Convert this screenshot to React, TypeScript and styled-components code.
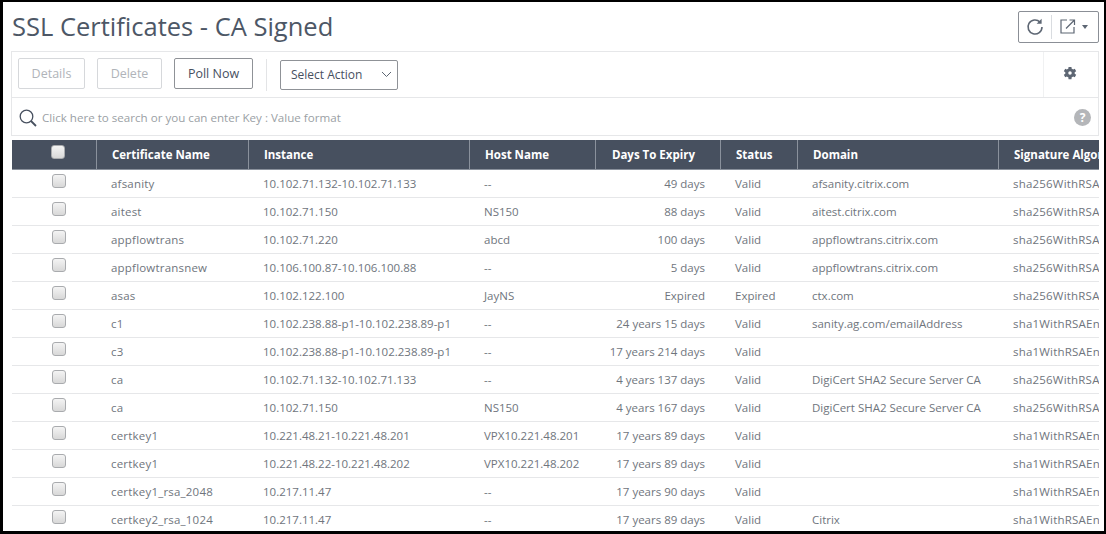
import React from "react";
import styled, { createGlobalStyle } from "styled-components";

const Global = createGlobalStyle`
  html, body { margin: 0; padding: 0; background: #fff; }
  body { font-family: "Open Sans", "Noto Sans", sans-serif; overflow: hidden; }
`;

const Frame = styled.div`
  box-sizing: border-box;
  width: 1106px;
  height: 534px;
  border-style: solid;
  border-color: #000;
  border-width: 2px 2px 3px 3px;
  padding: 0 5px 0 8px;
  background: #fff;
  overflow: hidden;
`;

const Header = styled.header`
  display: flex;
  align-items: center;
  justify-content: space-between;
  height: 49px;
  padding: 0 0 0 1px;
`;

const Title = styled.h1`
  margin: 0 0 1px;
  font-size: 25.5px;
  line-height: 32px;
  font-weight: 400;
  color: #4d5766;
`;

const HeaderActions = styled.div`
  display: flex;
  align-items: center;
  box-sizing: border-box;
  width: 81px;
  height: 32px;
  border: 1px solid #8b8f96;
  border-radius: 2px;
  color: #5d6673;
`;

const RefreshCell = styled.div`
  display: flex;
  align-items: center;
  justify-content: center;
  width: 32px;
  height: 24px;
  border-right: 1px solid #d9dce0;
`;

const ExportCell = styled.div`
  display: flex;
  align-items: center;
  flex: 1;
  gap: 6px;
  padding-left: 8px;
`;

const Caret = styled.span`
  width: 0;
  height: 0;
  border-left: 3.5px solid transparent;
  border-right: 3.5px solid transparent;
  border-top: 4px solid #5d6673;
`;

const Panel = styled.div`
  box-sizing: border-box;
  border: 1px solid #e6e7e9;
  width: 1088px;
`;

const Toolbar = styled.div`
  display: flex;
  align-items: center;
  height: 45px;
  padding-left: 6px;
  border-bottom: 1px solid #e6e7e9;
`;

const Button = styled.button<{ $off?: boolean; $w: number }>`
  box-sizing: border-box;
  width: ${(p) => p.$w}px;
  height: 31px;
  margin: 0 12px 2px 0;
  border: 1px solid ${(p) => (p.$off ? "#d6d8db" : "#8f9297")};
  border-radius: 2px;
  background: #fff;
  padding: 0;
  font: 400 12.5px "Open Sans", sans-serif;
  color: ${(p) => (p.$off ? "#b0b4b9" : "#47505f")};
`;

const Divider = styled.div`
  width: 1px;
  height: 32px;
  margin: 0 13px 0 1px;
  background: #e3e4e6;
`;

const Select = styled.div`
  box-sizing: border-box;
  display: flex;
  align-items: center;
  justify-content: space-between;
  width: 118px;
  height: 30px;
  padding: 0 5px 0 10px;
  border: 1px solid #8f9297;
  border-radius: 2px;
  font-size: 12px;
  color: #47505f;
`;

const GearCell = styled.div`
  display: flex;
  align-items: center;
  justify-content: center;
  margin-left: auto;
  width: 55px;
  height: 100%;
  border-left: 1px solid #f0f1f2;
  padding: 0 3px 3px 0;
  box-sizing: border-box;
`;

const SearchRow = styled.div`
  display: flex;
  align-items: center;
  box-sizing: border-box;
  height: 37px;
  padding: 2px 7px 0 7px;
  gap: 5px;
  font-size: 11.6px;
  color: #9b9fa5;
`;

const Help = styled.span`
  margin-left: auto;
  width: 17px;
  height: 17px;
  border-radius: 50%;
  background: #b4b6b9;
  color: #fff;
  font-size: 12px;
  font-weight: 700;
  line-height: 17px;
  text-align: center;
`;

const TableWrap = styled.div`
  width: 1087px;
  margin-top: 4px;
  margin-left: 1px;
  overflow: hidden;
`;

const Table = styled.table`
  table-layout: fixed;
  width: 1286px;
  border-collapse: separate;
  border-spacing: 0;
  font-size: 11.5px;
`;

const Th = styled.th<{ $right?: boolean; $center?: boolean }>`
  box-sizing: border-box;
  height: 30px;
  padding: ${(p) => (p.$right ? "0 25px 0 0" : p.$center ? "0 0 7px 8px" : "0 0 1px 15px")};
  background: #47505f;
  border-right: 1px solid #8a919c;
  border-bottom: 1px solid #8a919c;
  color: #fff;
  font-weight: 700;
  text-align: ${(p) => (p.$right ? "right" : p.$center ? "center" : "left")};
  white-space: nowrap;
`;

const Td = styled.td<{ $right?: boolean; $center?: boolean; $wide?: boolean }>`
  box-sizing: border-box;
  height: 28px;
  padding: ${(p) => (p.$right ? "0 16px 0 0" : p.$center ? "0 0 6px 9px" : "0 0 0 14px")};
  border-bottom: 1px solid #e6e7e9;
  color: #6f757d;
  letter-spacing: ${(p) => (p.$wide ? "0.2px" : "0")};
  text-align: ${(p) => (p.$right ? "right" : p.$center ? "center" : "left")};
  white-space: nowrap;
  overflow: hidden;
`;

const Check = styled.span`
  display: inline-block;
  box-sizing: border-box;
  width: 14px;
  height: 14px;
  vertical-align: middle;
  border: 1px solid #a9abae;
  border-radius: 3px;
  background: linear-gradient(#f4f4f4, #d8d8d8);
`;

const widths = [85, 152, 221, 126, 125, 77, 201, 299];
const heads = ["Certificate Name", "Instance", "Host Name", "Days To Expiry", "Status", "Domain", "Signature Algorithm"];

const rows = [
  ["afsanity", "10.102.71.132-10.102.71.133", "--", "49 days", "Valid", "afsanity.citrix.com", "sha256WithRSAEncryption"],
  ["aitest", "10.102.71.150", "NS150", "88 days", "Valid", "aitest.citrix.com", "sha256WithRSAEncryption"],
  ["appflowtrans", "10.102.71.220", "abcd", "100 days", "Valid", "appflowtrans.citrix.com", "sha256WithRSAEncryption"],
  ["appflowtransnew", "10.106.100.87-10.106.100.88", "--", "5 days", "Valid", "appflowtrans.citrix.com", "sha256WithRSAEncryption"],
  ["asas", "10.102.122.100", "JayNS", "Expired", "Expired", "ctx.com", "sha256WithRSAEncryption"],
  ["c1", "10.102.238.88-p1-10.102.238.89-p1", "--", "24 years 15 days", "Valid", "sanity.ag.com/emailAddress", "sha1WithRSAEncryption"],
  ["c3", "10.102.238.88-p1-10.102.238.89-p1", "--", "17 years 214 days", "Valid", "", "sha1WithRSAEncryption"],
  ["ca", "10.102.71.132-10.102.71.133", "--", "4 years 137 days", "Valid", "DigiCert SHA2 Secure Server CA", "sha256WithRSAEncryption"],
  ["ca", "10.102.71.150", "NS150", "4 years 167 days", "Valid", "DigiCert SHA2 Secure Server CA", "sha256WithRSAEncryption"],
  ["certkey1", "10.221.48.21-10.221.48.201", "VPX10.221.48.201", "17 years 89 days", "Valid", "", "sha1WithRSAEncryption"],
  ["certkey1", "10.221.48.22-10.221.48.202", "VPX10.221.48.202", "17 years 89 days", "Valid", "", "sha1WithRSAEncryption"],
  ["certkey1_rsa_2048", "10.217.11.47", "--", "17 years 90 days", "Valid", "", "sha1WithRSAEncryption"],
  ["certkey2_rsa_1024", "10.217.11.47", "--", "17 years 89 days", "Valid", "Citrix", "sha1WithRSAEncryption"],
];

export default function App() {
  return (
    <Frame>
      <Global />
      <Header>
        <Title>SSL Certificates - CA Signed</Title>
        <HeaderActions>
          <RefreshCell>
            <svg width="18" height="18" viewBox="0 0 18 18" fill="none" stroke="#5d6673" strokeWidth="1.6">
              <path d="M16 9a7 7 0 1 1-2-4.9" />
              <path d="M15.6 0.8v5h-5z" fill="#5d6673" stroke="none" />
            </svg>
          </RefreshCell>
          <ExportCell>
            <svg width="16" height="15" viewBox="0 0 16 15" fill="none" stroke="#5d6673" strokeWidth="1.2">
              <path d="M7 1H1v13h13V8" />
              <path d="M6 9.5l8-8M9.5 1h5v5" />
            </svg>
            <Caret />
          </ExportCell>
        </HeaderActions>
      </Header>
      <Panel>
        <Toolbar>
          <Button $off $w={67}>Details</Button>
          <Button $off $w={65}>Delete</Button>
          <Button $w={79}>Poll Now</Button>
          <Divider />
          <Select>
            Select Action
            <svg width="11" height="7" viewBox="0 0 11 7" fill="none" stroke="#5d6673" strokeWidth="1">
              <path d="M1 1l4.5 4.5L10 1" />
            </svg>
          </Select>
          <GearCell>
            <svg width="14" height="14" viewBox="0 0 24 24" fill="#5d6673">
              <path d="M20 13.4a8 8 0 0 0 0-2.8l2.6-1.7-2.4-4.2-2.9 1.3a8 8 0 0 0-2.4-1.4L14.5 1.5h-5l-.4 3.1a8 8 0 0 0-2.4 1.4L3.8 4.7 1.4 8.9 4 10.6a8 8 0 0 0 0 2.8l-2.6 1.7 2.4 4.2 2.9-1.3a8 8 0 0 0 2.4 1.4l.4 3.1h5l.4-3.1a8 8 0 0 0 2.4-1.4l2.9 1.3 2.4-4.2zM12 15a3 3 0 1 1 0-6 3 3 0 0 1 0 6z" />
            </svg>
          </GearCell>
        </Toolbar>
        <SearchRow>
          <svg width="18" height="18" viewBox="0 0 18 18" fill="none" stroke="#47505f" strokeWidth="1.3">
            <circle cx="7.5" cy="7.5" r="6.3" />
            <path d="M12 12l5 5" strokeWidth="1.8" />
          </svg>
          Click here to search or you can enter Key : Value format
          <Help>?</Help>
        </SearchRow>
      </Panel>
      <TableWrap>
        <Table>
          <colgroup>
            {widths.map((w, i) => (
              <col key={i} width={w} />
            ))}
          </colgroup>
          <thead>
            <tr>
              <Th $center><Check /></Th>
              {heads.map((h) => (
                <Th key={h} $right={h === "Days To Expiry"}>{h}</Th>
              ))}
            </tr>
          </thead>
          <tbody>
            {rows.map((r, i) => (
              <tr key={i}>
                <Td $center><Check /></Td>
                {r.map((c, j) => (
                  <Td key={j} $right={j === 3} $wide={j === 0 || j === 6}>{c}</Td>
                ))}
              </tr>
            ))}
          </tbody>
        </Table>
      </TableWrap>
    </Frame>
  );
}
